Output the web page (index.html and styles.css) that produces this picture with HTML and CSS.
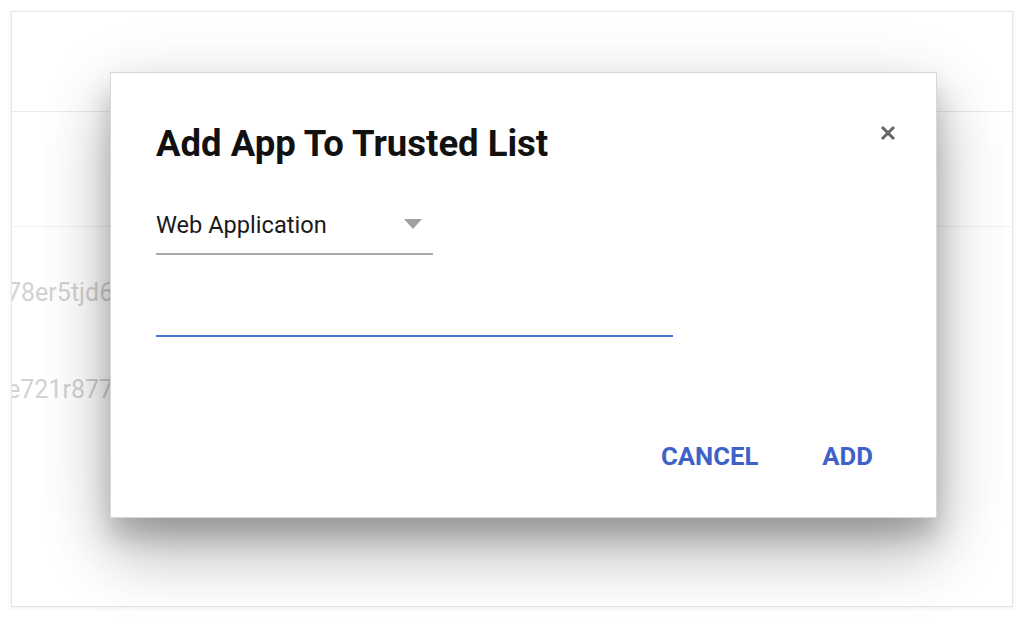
FILE: index.html
```html
<!DOCTYPE html>
<html>
<head>
<meta charset="utf-8">
<link rel="stylesheet" href="styles.css">
</head>
<body>
<div class="page">
  <div class="card">
    <div class="card-header"></div>
    <div class="card-subhead"></div>
    <div class="rows">
      <div class="row"><span class="cell">78er5tjd6u</span></div>
      <div class="row"><span class="cell">e721r877</span></div>
    </div>
  </div>

  <div class="dialog" role="dialog">
    <div class="dialog-head">
      <h1 class="dialog-title">Add App To Trusted List</h1>
      <button class="close" aria-label="Close">
        <svg width="16" height="16" viewBox="0 0 16 16"><path d="M2 2L14 14M14 2L2 14" stroke="#666" stroke-width="3" fill="none"/></svg>
      </button>
    </div>
    <div class="select">
      <span class="select-value">Web Application</span>
      <svg class="caret" width="18" height="11" viewBox="0 0 18 11"><path d="M0 0H18L9 10Z" fill="#a0a0a0"/></svg>
    </div>
    <div class="input"></div>
    <div class="actions">
      <button class="btn">CANCEL</button>
      <button class="btn">ADD</button>
    </div>
  </div>
</div>
</body>
</html>
```

FILE: styles.css
```css
* { box-sizing: border-box; }
html, body { margin: 0; padding: 0; background: #fff; }
body { font-family: Roboto, "Noto Sans", "Liberation Sans", sans-serif; }

.page {
  position: relative;
  width: 1024px;
  height: 619px;
  padding: 11px 11px 12px 11px;
  overflow: hidden;
}

.card {
  height: 596px;
  border: 1px solid #e6e6e6;
  box-shadow: 0 1px 4px rgba(0,0,0,0.08);
  background: #fff;
  overflow: hidden;
}
.card-header {
  height: 100px;
  border-bottom: 1px solid #ebebeb;
}
.card-subhead {
  height: 115px;
  border-bottom: 1px solid #f0f0f0;
}
.rows {
  padding-top: 17px;
}
.row {
  height: 97px;
  display: flex;
  align-items: center;
}
.cell {
  font-size: 25px;
  color: #d2d2d2;
  margin-left: -5px;
  white-space: nowrap;
}

.dialog {
  position: absolute;
  left: 110px;
  top: 72px;
  width: 827px;
  height: 446px;
  background: #fff;
  border: 1px solid #d8d8d8;
  box-shadow: 0 38px 60px rgba(0,0,0,0.22), 0 14px 70px rgba(0,0,0,0.12), 0 18px 24px rgba(0,0,0,0.18);
  padding: 53px 40px 0 45px;
  display: flex;
  flex-direction: column;
}
.dialog-head {
  display: flex;
  justify-content: space-between;
  align-items: flex-start;
}
.dialog-title {
  margin: 0;
  font-size: 36.5px;
  line-height: 36.5px;
  font-weight: 700;
  color: #111;
}
.close {
  border: 0;
  background: none;
  padding: 0;
  margin-top: -1px;
  width: 16px;
  height: 16px;
  display: flex;
}

.select {
  margin-top: 49px;
  width: 277px;
  height: 43px;
  border-bottom: 2px solid #a8a8a8;
  display: flex;
  justify-content: space-between;
  align-items: flex-start;
  padding-right: 11px;
}
.select-value {
  font-size: 23.6px;
  line-height: 26px;
  color: #1a1a1a;
}
.caret { margin-top: 7px; }

.input {
  margin-top: 80px;
  width: 517px;
  height: 2px;
  background: #4a72d8;
}

.actions {
  margin-top: 105px;
  display: flex;
  justify-content: flex-end;
  gap: 64px;
  padding-right: 23px;
}
.btn {
  border: 0;
  background: none;
  padding: 0;
  font-family: Roboto, "Noto Sans", "Liberation Sans", sans-serif;
  font-size: 25.7px;
  line-height: 28px;
  font-weight: 700;
  color: #3e62c8;
}
```
